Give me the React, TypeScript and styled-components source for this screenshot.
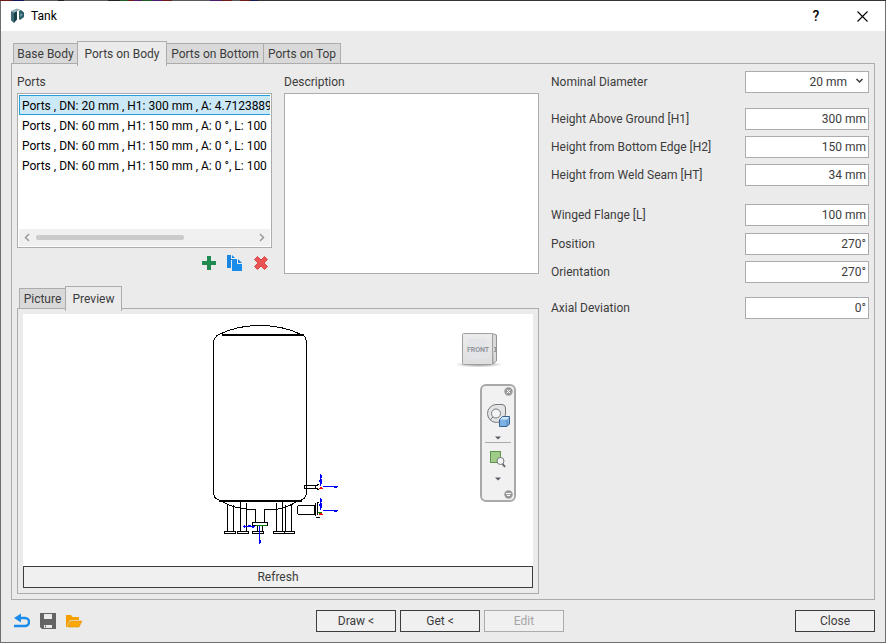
import React, { useState } from "react";
import styled, { createGlobalStyle } from "styled-components";

const line = "#acacac";
const face = "#ebebeb";
const ink = "#3c3c3c";

const GlobalStyle = createGlobalStyle`
  *, *::before, *::after { box-sizing: border-box; }
  body { margin: 0; background: ${face}; }
  body, button, input, select, textarea {
    font-family: Roboto, "Open Sans", sans-serif;
    font-size: 12px;
    line-height: 16px;
    color: ${ink};
  }
`;

const Frame = styled.div`
  min-height: 100vh;
  padding: 1px;
  display: flex;
  background:
    linear-gradient(90deg, #6e1a1a 0 12px, #17175c 12px 24px, #5a5a5a 24px 58px, #222 58px 64px, #5a5a5a 64px 108px,
      #222 108px 120px, #1c5c1c 120px 128px, #6e1a1a 128px 134px, #4a1a6e 134px 142px, #1c5c1c 142px 152px,
      #4a1a6e 152px 162px, #6e1a1a 162px 172px, #5a5a5a 172px 210px, #4a1a6e 210px 222px, #6e1a1a 222px 232px,
      #5a5a5a 232px 240px, #6e1a1a 240px 250px, #17175c 250px 258px, #333 258px 100%) 0 0 / 100% 1px no-repeat,
    #6e6e6e;
`;

const Dialog = styled.div`
  flex: 1;
  min-width: 0;
  display: flex;
  flex-direction: column;
  background: ${face};
`;

const TitleBar = styled.header`
  height: 30px;
  padding-left: 9px;
  display: flex;
  align-items: center;
  background: #fff;
  color: #000;
`;

const Title = styled.h1`
  flex: 1;
  margin: 0;
  padding-left: 6px;
  font-size: 12px;
  line-height: 16px;
  font-weight: 400;
`;

const CaptionButton = styled.button`
  width: 46px;
  height: 30px;
  padding: 0;
  border: 0;
  display: grid;
  place-items: center;
  background: transparent;
  font-size: 14px;
  font-weight: 500;
  color: #000;
`;

const Main = styled.main`
  flex: 1;
  display: flex;
  flex-direction: column;
  padding: 10px 10px 0;
`;

const TabRow = styled.div`
  position: relative;
  z-index: 1;
  height: 22px;
  padding-left: 2px;
  display: flex;
  align-items: flex-start;
`;

const Tab = styled.button<{ $active: boolean; $width: number }>`
  flex: none;
  width: ${(p) => p.$width}px;
  height: ${(p) => (p.$active ? 25 : 21)}px;
  margin-top: ${(p) => (p.$active ? 0 : 2)}px;
  margin-right: -1px;
  padding: 0;
  border: 1px solid ${line};
  border-bottom-color: ${(p) => (p.$active ? face : line)};
  border-bottom-width: ${(p) => (p.$active ? 0 : 1)}px;
  background: ${(p) => (p.$active ? face : "#d9d9d9")};
  position: relative;
  z-index: ${(p) => (p.$active ? 1 : 0)};
  white-space: nowrap;
  display: flex;
  align-items: center;
  justify-content: center;
`;

const TabPanel = styled.section`
  flex: 1;
  border: 1px solid ${line};
  padding: 7px 5px 5px;
  display: grid;
  grid-template-columns: minmax(0, 1fr) 318px;
  column-gap: 12px;
`;

const LeftPane = styled.div`
  display: flex;
  flex-direction: column;
  gap: 12px;
`;

const Lists = styled.div`
  display: grid;
  grid-template-columns: repeat(2, minmax(0, 1fr));
  column-gap: 12px;
`;

const Column = styled.div`
  display: flex;
  flex-direction: column;
`;

const ColumnLabel = styled.label`
  height: 22px;
  line-height: 22px;
`;

const ListFrame = styled.div`
  height: 155px;
  padding: 1px;
  border: 1px solid ${line};
  background: #fff;
  display: flex;
  flex-direction: column;
`;

const PortList = styled.ul`
  flex: 1;
  margin: 0;
  padding: 0;
  list-style: none;
  overflow: hidden;
  color: #000;
`;

const PortItem = styled.li<{ $selected: boolean }>`
  height: 20px;
  padding-left: 2px;
  border: 1px solid ${(p) => (p.$selected ? "#26a0da" : "transparent")};
  border-right: 0;
  background: ${(p) => (p.$selected ? "#cbe8f6" : "transparent")};
  line-height: 20px;
  white-space: pre;
`;

const ScrollBar = styled.div`
  height: 17px;
  display: flex;
  align-items: center;
  background: #f0f0f0;
`;

const ScrollArrow = styled.button`
  width: 17px;
  height: 17px;
  padding: 0;
  border: 0;
  display: grid;
  place-items: center;
  background: transparent;
`;

const ScrollTrack = styled.div`
  flex: 1;
`;

const ScrollThumb = styled.div`
  width: 68%;
  height: 5px;
  border-radius: 2px;
  background: #cbcbcb;
`;

const ListTools = styled.div`
  height: 26px;
  padding: 4px 3px 0 0;
  display: flex;
  align-items: center;
  justify-content: flex-end;
  gap: 10px;
`;

const IconButton = styled.button`
  width: 16px;
  height: 16px;
  padding: 0;
  border: 0;
  display: block;
  background: transparent;

  svg { display: block; }
`;

const DescriptionBox = styled.textarea`
  flex: 1;
  width: 100%;
  border: 1px solid ${line};
  border-radius: 0;
  background: #fff;
  resize: none;
  display: block;
`;

const PreviewTabs = styled.div`
  flex: 1;
  display: flex;
  flex-direction: column;
`;

const PreviewPanel = styled.div`
  flex: 1;
  padding: 5px;
  border: 1px solid ${line};
  display: flex;
  flex-direction: column;
`;

const Viewport = styled.div`
  position: relative;
  flex: 1;
  display: flex;
  align-items: center;
  justify-content: center;
  background: #fff;
`;

const CubeButton = styled.button`
  position: absolute;
  top: 16px;
  right: 30px;
  width: 48px;
  height: 40px;
  padding: 0;
  border: 0;
  background: transparent;

  svg { display: block; }
`;

const NavBar = styled.div`
  position: absolute;
  top: 70px;
  right: 17px;
  width: 36px;
  height: 118px;
  border: 2px solid #a9a9a9;
  border-radius: 6px;
  background: #f1f1f1;
  display: flex;
  flex-direction: column;
  align-items: center;
`;

const NavButton = styled.button<{ $height: number }>`
  flex: none;
  height: ${(p) => p.$height}px;
  padding: 0;
  border: 0;
  background: transparent;
  display: grid;
  place-items: center;

  svg { display: block; }
`;

const NavCornerButton = styled(NavButton)`
  align-self: flex-end;
  padding-right: 1px;

  &:last-child { margin-top: auto; }
`;

const NavRule = styled.div`
  flex: none;
  width: 26px;
  height: 1px;
  background: #a9a9a9;
`;

const PushButton = styled.button<{ $fill?: boolean }>`
  width: ${(p) => (p.$fill ? "100%" : "80px")};
  height: 22px;
  padding: 0;
  border: 1px solid ${ink};
  border-radius: 0;
  background: #f0f0f0;
  color: ${ink};

  &:disabled {
    border-color: ${line};
    color: #a5a5a5;
  }
`;

const Form = styled.form`
  display: flex;
  flex-direction: column;
`;

const Field = styled.div<{ $gap: number }>`
  margin-top: ${(p) => p.$gap}px;
  display: grid;
  grid-template-columns: minmax(0, 1fr) 124px;
  align-items: center;
`;

const ValueInput = styled.input`
  width: 100%;
  height: 22px;
  padding: 0 2px;
  border: 1px solid ${line};
  border-radius: 0;
  background: #fff;
  text-align: right;
`;

const SelectWrap = styled.div`
  position: relative;

  svg {
    position: absolute;
    right: 5px;
    top: 6px;
    pointer-events: none;
  }
`;

const ValueSelect = styled.select`
  appearance: none;
  width: 100%;
  height: 22px;
  padding: 0 21px 0 2px;
  border: 1px solid ${line};
  border-radius: 0;
  background: #fff;
  text-align: right;
  text-align-last: right;
  display: block;
`;

const Footer = styled.footer`
  padding: 10px;
  display: grid;
  grid-template-columns: 1fr auto 1fr;
  align-items: center;
`;

const ToolGroup = styled.div`
  padding-left: 3px;
  display: flex;
  align-items: center;
  gap: 10px;
`;

const ActionGroup = styled.div`
  padding-right: 6px;
  display: flex;
  gap: 4px;
`;

const CloseGroup = styled.div`
  display: flex;
  justify-content: flex-end;
`;

const AppLogo = () => (
  <svg width="15" height="16" viewBox="0 0 15 16" aria-hidden="true">
    <path d="M1 3 L4 4.500 V15 L1 12.500 Z" fill="#3d6a75" />
    <path d="M4 4.500 L7 3 V11.500 L4 15 Z" fill="#16404a" />
    <path d="M1 3 L7 0.500 L11 2 L7 3 L4 4.500 Z" fill="#8fb0b6" />
    <path d="M9 3 L11 2 L14 4.500 V9 L10 12 L9 11 Z" fill="#2b5f6a" />
    <path d="M10.500 5.500 L12.500 6.500 L10.500 9 Z" fill="#8db0b7" />
  </svg>
);

const CloseGlyph = () => (
  <svg width="11" height="11" viewBox="0 0 11 11" aria-hidden="true">
    <path d="M0.5 0.5 L10.5 10.5 M10.5 0.5 L0.5 10.5" stroke="#000" strokeWidth="1.1" />
  </svg>
);

const Chevron = ({ d, color = "#9a9a9a" }: { d: string; color?: string }) => (
  <svg width="9" height="9" viewBox="0 0 9 9" aria-hidden="true">
    <path d={d} fill="none" stroke={color} strokeWidth="1.5" />
  </svg>
);

const PlusIcon = () => (
  <svg width="16" height="16" viewBox="0 0 16 16" aria-hidden="true">
    <path d="M6 1h4v5h5v4h-5v5H6v-5H1V6h5z" fill="#1f8b50" />
  </svg>
);

const CopyIcon = () => (
  <svg width="16" height="16" viewBox="0 0 16 16" aria-hidden="true">
    <path d="M0 0h4v4h4v1H4v8H0z" fill="#1a86e0" />
    <path d="M5 0l3 3H5z" fill="#1a86e0" />
    <path d="M5 4h5v5h5v7H5z" fill="#1a8ceb" />
    <path d="M11 4l4 4h-4z" fill="#1a86e0" />
  </svg>
);

const DeleteIcon = () => (
  <svg width="16" height="16" viewBox="0 0 16 16" aria-hidden="true">
    <path
      d="M4.5 1.5 L8 5 L11.5 1.5 L14.5 4.5 L11 8 L14.5 11.5 L11.5 14.5 L8 11 L4.5 14.5 L1.5 11.5 L5 8 L1.5 4.5 Z"
      fill="#ea5455"
      stroke="#dc4648"
      strokeLinejoin="round"
    />
  </svg>
);

const UndoIcon = () => (
  <svg width="16" height="16" viewBox="0 0 16 16" aria-hidden="true">
    <path d="M5 5h6a4 4 0 0 1 0 8H0" fill="none" stroke="#1a8ceb" strokeWidth="2.4" />
    <path d="M0 5 L7 0.5 V9.5 Z" fill="#1a8ceb" />
  </svg>
);

const SaveIcon = () => (
  <svg width="16" height="16" viewBox="0 0 16 16" aria-hidden="true">
    <path d="M0 0h16v16H2l-2-2z" fill="#646464" />
    <path d="M4 1h8v5H4z" fill={face} />
    <path d="M4 12h8v3H4z" fill={face} />
    <path d="M5 12.5h1v2H5z" fill="#646464" />
  </svg>
);

const FolderIcon = () => (
  <svg width="16" height="16" viewBox="0 0 16 16" aria-hidden="true">
    <path d="M0 2h5l1.500 2H13v3H4L0.800 14H0z" fill="#f5a000" />
    <path d="M4.500 8H16l-3 6H1.500z" fill="#fba70a" stroke="#e09400" strokeWidth="0.6" />
  </svg>
);

const TankDrawing = () => (
  <svg width="146" height="236" viewBox="205 322 146 236" fill="none" shapeRendering="crispEdges" role="img" aria-label="Tank">
    <g stroke="#000">
      <path d="M219 334.500 Q237 325.500 259.500 325.500 Q283 325.500 301 334.500" />
      <path d="M222 335 H303" strokeWidth="2" />
      <path d="M224 335.500 H298 M303 334.500 Q306.500 338 306.500 344 V492 Q306.500 499 300 500.500" />
      <path d="M219 334.500 Q213.500 337 213.500 344 V492 Q213.500 499 220 500.500" />
      <path d="M219 501 H302" strokeWidth="2" />
      <path d="M222 501.500 Q233 508.500 247 508.500 M247 509.500 H255.500 V522 M264.500 522 V509.500 H275 Q287 508 297 501.500" />
      <path d="M227.500 504 V531 M233.500 505 V531 M224.500 531.500 H235.500 V533.500 H224.500 Z" />
      <path d="M240.500 502 V531 M246.500 503 V531 M237.500 531.500 H248.500 V533.500 H237.500 Z" />
      <path d="M276.500 503 V531 M282.500 502 V531 M273.500 531.500 H284.500 V533.500 H273.500 Z" />
      <path d="M285.500 505 V531 M291.500 504 V531 M284.500 531.500 H294.500 V533.500 H284.500 Z" />
      <path d="M252.500 522.500 H267.500 V525.500 H252.500 Z" />
      <path d="M257.500 526 V531 M262.500 526 V531 M252.500 531.500 H263.500 V533.500 H252.500 Z" />
      <path d="M304.500 485.500 H315.500 V488.500 H304.500 Z M316 485.500 L319 484.500 M316 488.500 L319 489.500" />
      <path d="M314.500 505.500 H298.500 L297.500 507 V513 L298.500 514.500 H314.500 Z" />
      <path d="M315.500 503 V516 M317.500 503 V515 M316 517.500 H320 M317 502.500 H319" />
    </g>
    <g stroke="#0000ff">
      <path d="M259.500 526 V544 M260.500 540 V543 M243 526.500 H255 M244.500 525 V528 M248 525.500 H251 M252 527.500 H254" />
      <path d="M320.500 474 V486 M321.500 475 V478 M321.500 479 V484 M319.500 480 V482 M323 486.500 H338 M334 487.500 H337" />
      <path d="M320.500 498 V510 M321.500 499 V502 M321.500 503 V508 M319.500 504 V506 M323 510.500 H338 M334 511.500 H337" />
    </g>
    <path d="M256 525.500 H267 M318 512.500 H322 M319 513.500 H321" stroke="#008000" />
    <path d="M320 487.500 H322 M319 488.500 H323 M320 513.500 H322 M319 514.500 H323" stroke="#ff0000" />
  </svg>
);

const ViewCube = () => (
  <svg width="48" height="40" viewBox="0 0 48 40" aria-hidden="true">
    <defs>
      <radialGradient id="cubeShadow">
        <stop offset="0" stopColor="#777" stopOpacity="0.800" />
        <stop offset="1" stopColor="#777" stopOpacity="0" />
      </radialGradient>
      <linearGradient id="cubeFace" x1="0" y1="0" x2="0" y2="1">
        <stop offset="0" stopColor="#ececec" />
        <stop offset="1" stopColor="#dedede" />
      </linearGradient>
    </defs>
    <ellipse cx="24" cy="34.500" rx="24" ry="3" fill="url(#cubeShadow)" />
    <path d="M37 3.500 L41.500 5 V31 L38 34 Z" fill="#dadada" stroke="#959595" />
    <rect x="7.500" y="3.500" width="30" height="31" rx="1" fill="url(#cubeFace)" stroke="#a0a0a0" />
    <rect x="13" y="9" width="19" height="20" fill="#e2e4e8" />
    <path d="M39 17.500h2 M40.500 17v5 M39 21.500h2" stroke="#999" fill="none" />
    <text x="23" y="22" textAnchor="middle" fontFamily="Roboto, sans-serif" fontSize="7" fontWeight="500" fill="#888c90">
      FRONT
    </text>
  </svg>
);

const WheelIcon = () => (
  <svg width="26" height="28" viewBox="0 0 26 28" aria-hidden="true">
    <path d="M12 3.500 H17 Q20.500 3.500 20.500 7 V13 A9 9 0 1 1 11 3.500 Z" fill="#e2e4e6" stroke="#77797c" />
    <circle cx="11" cy="12.500" r="4.500" fill="#f4f4f4" stroke="#77797c" />
    <path d="M5 19 L8 16" stroke="#77797c" />
    <path d="M14.500 18.500 L17.500 15.500 H24.500 V23 L22 25.500 H14.500 Z" fill="#7eb1e4" stroke="#34618e" />
    <path d="M15 18.500 L17.500 16 H24 L22 18.500 Z" fill="#cfe5f8" />
    <path d="M22 19 V25" stroke="#4f82b5" />
  </svg>
);

const ZoomIcon = () => (
  <svg width="18" height="18" viewBox="0 0 18 18" aria-hidden="true">
    <rect x="1.500" y="1.500" width="10" height="11" fill="#a0cc8a" stroke="#5f9150" />
    <path d="M12.500 12.500 L16 17" stroke="#666" strokeWidth="2" />
    <circle cx="11.500" cy="11" r="3.500" fill="#f2f6f8" stroke="#777" />
  </svg>
);

const DownMark = () => (
  <svg width="6" height="4" viewBox="0 0 6 4" aria-hidden="true">
    <path d="M0 0.500 H6 L3 3.500 Z" fill="#5c5c66" />
  </svg>
);

const RoundMark = ({ d }: { d: string }) => (
  <svg width="9" height="9" viewBox="0 0 9 9" aria-hidden="true">
    <circle cx="4.500" cy="4.500" r="4.200" fill="#999" />
    <path d={d} stroke="#fff" fill="none" />
  </svg>
);

const mainTabs = [
  { label: "Base Body", width: 65 },
  { label: "Ports on Body", width: 90 },
  { label: "Ports on Bottom", width: 98 },
  { label: "Ports on Top", width: 78 },
];

const previewTabs = [
  { label: "Picture", width: 47 },
  { label: "Preview", width: 57 },
];

const ports = [
  "Ports , DN: 20 mm , H1: 300 mm , A: 4.7123889",
  "Ports , DN: 60 mm , H1: 150 mm , A: 0 °, L: 100",
  "Ports , DN: 60 mm , H1: 150 mm , A: 0 °, L: 100",
  "Ports , DN: 60 mm , H1: 150 mm , A: 0 °, L: 100",
];

const fields = [
  { id: "h1", label: "Height Above Ground [H1]", value: "300 mm", gap: 15 },
  { id: "h2", label: "Height from Bottom Edge [H2]", value: "150 mm", gap: 6 },
  { id: "ht", label: "Height from Weld Seam [HT]", value: "34 mm", gap: 6 },
  { id: "flange", label: "Winged Flange [L]", value: "100 mm", gap: 18 },
  { id: "position", label: "Position", value: "270°", gap: 7 },
  { id: "orientation", label: "Orientation", value: "270°", gap: 6 },
  { id: "deviation", label: "Axial Deviation", value: "0°", gap: 14 },
];

interface TabStripProps {
  tabs: { label: string; width: number }[];
  active: number;
  onChange: (index: number) => void;
}

const TabStrip = ({ tabs, active, onChange }: TabStripProps) => (
  <TabRow role="tablist">
    {tabs.map((tab, i) => (
      <Tab
        key={tab.label}
        type="button"
        role="tab"
        aria-selected={i === active}
        $active={i === active}
        $width={tab.width}
        onClick={() => onChange(i)}
      >
        {tab.label}
      </Tab>
    ))}
  </TabRow>
);

export default function App() {
  const [tab, setTab] = useState(1);
  const [view, setView] = useState(1);
  const [selected, setSelected] = useState(0);

  return (
    <>
      <GlobalStyle />
      <Frame>
        <Dialog role="dialog" aria-labelledby="dialog-title">
          <TitleBar>
            <AppLogo />
            <Title id="dialog-title">Tank</Title>
            <CaptionButton type="button">?</CaptionButton>
            <CaptionButton type="button" aria-label="Close window">
              <CloseGlyph />
            </CaptionButton>
          </TitleBar>

          <Main>
            <TabStrip tabs={mainTabs} active={tab} onChange={setTab} />
            <TabPanel>
              <LeftPane>
                <Lists>
                  <Column>
                    <ColumnLabel id="ports-label">Ports</ColumnLabel>
                    <ListFrame>
                      <PortList role="listbox" aria-labelledby="ports-label">
                        {ports.map((port, i) => (
                          <PortItem
                            key={i}
                            role="option"
                            aria-selected={i === selected}
                            $selected={i === selected}
                            onClick={() => setSelected(i)}
                          >
                            {port}
                          </PortItem>
                        ))}
                      </PortList>
                      <ScrollBar>
                        <ScrollArrow type="button" aria-label="Scroll left">
                          <Chevron d="M6 1 L2.500 4.500 L6 8" />
                        </ScrollArrow>
                        <ScrollTrack>
                          <ScrollThumb />
                        </ScrollTrack>
                        <ScrollArrow type="button" aria-label="Scroll right">
                          <Chevron d="M3 1 L6.500 4.500 L3 8" />
                        </ScrollArrow>
                      </ScrollBar>
                    </ListFrame>
                    <ListTools>
                      <IconButton type="button" aria-label="Add port"><PlusIcon /></IconButton>
                      <IconButton type="button" aria-label="Copy port"><CopyIcon /></IconButton>
                      <IconButton type="button" aria-label="Delete port"><DeleteIcon /></IconButton>
                    </ListTools>
                  </Column>
                  <Column>
                    <ColumnLabel htmlFor="description">Description</ColumnLabel>
                    <DescriptionBox id="description" />
                  </Column>
                </Lists>

                <PreviewTabs>
                  <TabStrip tabs={previewTabs} active={view} onChange={setView} />
                  <PreviewPanel>
                    <Viewport>
                      <TankDrawing />
                      <CubeButton type="button" aria-label="Front view"><ViewCube /></CubeButton>
                      <NavBar>
                        <NavCornerButton type="button" aria-label="Hide bar" $height={11}>
                          <RoundMark d="M2.800 2.800 L6.200 6.200 M6.200 2.800 L2.800 6.200" />
                        </NavCornerButton>
                        <NavButton type="button" aria-label="Steering wheel" $height={36}><WheelIcon /></NavButton>
                        <NavButton type="button" aria-label="Wheel options" $height={9}><DownMark /></NavButton>
                        <NavRule />
                        <NavButton type="button" aria-label="Zoom" $height={32}><ZoomIcon /></NavButton>
                        <NavButton type="button" aria-label="Zoom options" $height={8}><DownMark /></NavButton>
                        <NavCornerButton type="button" aria-label="Bar options" $height={11}>
                          <RoundMark d="M2 3.500 H7 M3 5.500 H6" />
                        </NavCornerButton>
                      </NavBar>
                    </Viewport>
                    <PushButton type="button" $fill>Refresh</PushButton>
                  </PreviewPanel>
                </PreviewTabs>
              </LeftPane>

              <Form onSubmit={(e) => e.preventDefault()}>
                <Field $gap={0}>
                  <label htmlFor="diameter">Nominal Diameter</label>
                  <SelectWrap>
                    <ValueSelect id="diameter" defaultValue="20 mm">
                      <option>20 mm</option>
                    </ValueSelect>
                    <Chevron d="M1.500 2 L4.500 5 L7.500 2" color={ink} />
                  </SelectWrap>
                </Field>
                {fields.map((f) => (
                  <Field key={f.id} $gap={f.gap}>
                    <label htmlFor={f.id}>{f.label}</label>
                    <ValueInput id={f.id} type="text" defaultValue={f.value} />
                  </Field>
                ))}
              </Form>
            </TabPanel>
          </Main>

          <Footer>
            <ToolGroup>
              <IconButton type="button" aria-label="Undo"><UndoIcon /></IconButton>
              <IconButton type="button" aria-label="Save"><SaveIcon /></IconButton>
              <IconButton type="button" aria-label="Open"><FolderIcon /></IconButton>
            </ToolGroup>
            <ActionGroup>
              <PushButton type="button">Draw &lt;</PushButton>
              <PushButton type="button">Get &lt;</PushButton>
              <PushButton type="button" disabled>Edit</PushButton>
            </ActionGroup>
            <CloseGroup>
              <PushButton type="button">Close</PushButton>
            </CloseGroup>
          </Footer>
        </Dialog>
      </Frame>
    </>
  );
}
